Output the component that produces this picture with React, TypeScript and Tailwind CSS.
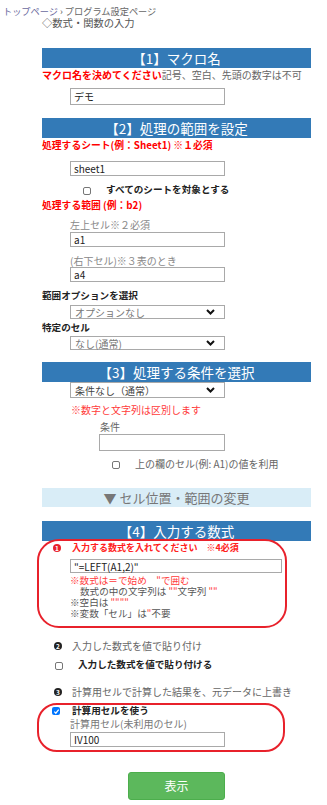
import React from "react";

const Header = ({ children, className = "" }: { children: React.ReactNode; className?: string }) => (
  <div className={`h-[20px] bg-[#337ab7] text-white text-[13.5px] leading-[20px] text-center ${className}`}>{children}</div>
);

const Input = ({ value, className = "" }: { value: string; className?: string }) => (
  <div className={`border border-[#a9a9a9] bg-white text-[10px] text-[#222] pl-[3px] flex items-center ${className}`}>{value}</div>
);

const Chevron = () => (
  <svg width="9" height="6" viewBox="0 0 9 6" className="shrink-0">
    <polyline points="1,1 4.5,4.5 8,1" fill="none" stroke="#111" strokeWidth="2" />
  </svg>
);

const Select = ({ value, className = "" }: { value: string; className?: string }) => (
  <div className={`border border-[#a9a9a9] bg-white text-[10px] pl-[4px] pr-[9px] flex items-center justify-between ${className}`}>
    <span>{value}</span>
    <Chevron />
  </div>
);

const Box = ({ checked = false, className = "" }: { checked?: boolean; className?: string }) =>
  checked ? (
    <span className={`inline-flex shrink-0 items-center justify-center w-[8px] h-[8px] rounded-[2px] bg-[#0075ff] ${className}`}>
      <svg width="7" height="7" viewBox="0 0 8 8">
        <polyline points="1.5,4.2 3.2,6 6.5,1.8" fill="none" stroke="#fff" strokeWidth="1.4" />
      </svg>
    </span>
  ) : (
    <span className={`inline-block shrink-0 w-[8px] h-[8px] rounded-[2px] border border-[#767676] bg-white ${className}`} />
  );

const Num = ({ n, red = false }: { n: string; red?: boolean }) => (
  <span
    className={`inline-flex shrink-0 items-center justify-center w-[8px] h-[8px] rounded-full text-white text-[6.5px] font-bold leading-none ${
      red ? "bg-[#e8212b]" : "bg-[#222]"
    }`}
  >
    {n}
  </span>
);

export default function App() {
  return (
    <div className="w-[327px] h-[805px] bg-white overflow-hidden font-['Noto_Sans_CJK_JP','Noto_Sans',sans-serif] text-[#333]">
      <div className="h-[17px] pt-[5px] pl-[3px] text-[9.2px] leading-[12px] whitespace-nowrap">
        <span className="text-[#6a6a9e]">トップページ</span>
        <span className="text-[#555]"> › </span>
        <span className="text-[#666]">プログラム設定ページ</span>
      </div>
      <div className="pl-[42px] h-[12px] text-[10.3px] leading-[12px] text-[#555]">◇数式・関数の入力</div>

      <div className="ml-[42px] w-[269px] flex flex-col">
        {/* 1 */}
        <Header className="mt-[19px]">【1】マクロ名</Header>
        <div className="h-[14px] leading-[14px] text-[10px] whitespace-nowrap">
          <span className="text-[#ff0000] font-bold">マクロ名を決めてください</span>
          <span className="text-[#666]">記号、空白、先頭の数字は不可</span>
        </div>
        <Input value="デモ" className="mt-[6px] ml-[28px] w-[155px] h-[17px]" />

        {/* 2 */}
        <Header className="mt-[13px]">【2】処理の範囲を設定</Header>
        <div className="h-[14px] leading-[14px] text-[9.8px] text-[#ff0000] font-bold whitespace-nowrap">
          処理するシート(例：Sheet1) ※１必須
        </div>
        <Input value="sheet1" className="mt-[9px] ml-[28px] w-[155px] h-[15px]" />
        <div className="mt-[6px] h-[14px] pl-[41px] flex items-center gap-[15px]">
          <Box className="mt-[4px]" />
          <span className="leading-[14px] text-[9.6px] font-bold text-[#222] whitespace-nowrap">すべてのシートを対象とする</span>
        </div>
        <div className="mt-[2px] h-[14px] leading-[14px] text-[9.8px] text-[#ff0000] font-bold">処理する範囲 (例：b2)</div>
        <div className="mt-[6px] ml-[28px] h-[14px] leading-[14px] text-[10px] text-[#888]">左上セル※２必須</div>
        <Input value="a1" className="ml-[28px] w-[155px] h-[15px]" />
        <div className="mt-[8px] ml-[28px] h-[12px] leading-[12px] text-[10px] text-[#888]">(右下セル)※３表のとき</div>
        <Input value="a4" className="ml-[28px] w-[155px] h-[15px]" />
        <div className="mt-[7px] h-[12px] leading-[12px] text-[9.6px] font-bold text-[#222]">範囲オプションを選択</div>
        <Select value="オプションなし" className="mt-[4px] ml-[28px] w-[155px] h-[14px] text-[#777]" />
        <div className="mt-[2px] h-[12px] leading-[12px] text-[9.6px] font-bold text-[#222]">特定のセル</div>
        <Select value="なし(通常)" className="mt-[3px] ml-[28px] w-[155px] h-[14px] text-[#777]" />

        {/* 3 */}
        <Header className="mt-[12px]">【3】処理する条件を選択</Header>
        <Select value="条件なし（通常）" className="ml-[28px] w-[155px] h-[16px] text-[#444]" />
        <div className="mt-[5px] ml-[29px] h-[14px] leading-[14px] text-[10px] text-[#ff3b3b]">※数字と文字列は区別します</div>
        <div className="mt-[3px] ml-[58px] h-[14px] leading-[14px] text-[10px] text-[#666]">条件</div>
        <Input value="" className="ml-[57px] w-[126px] h-[17px]" />
        <div className="mt-[6px] h-[14px] pl-[70px] flex items-center gap-[15px]">
          <Box className="mt-[2px]" />
          <span className="leading-[14px] text-[10px] text-[#666] whitespace-nowrap">上の欄のセル(例: A1)の値を利用</span>
        </div>

        <div className="mt-[17px] h-[19px] bg-[#d9edf7] text-[#777] text-[13px] leading-[19px] text-center">▼ セル位置・範囲の変更</div>

        {/* 4 */}
        <Header className="mt-[14px]">【4】入力する数式</Header>
        <div className="-mt-[2px] -ml-[5px] w-[250px] h-[89px] border-2 border-[#e8212b] rounded-[22px] flex flex-col">
          <div className="h-[14px] pl-[14px] flex items-center gap-[11px]">
            <Num n="1" red />
            <span className="leading-[14px] text-[9px] font-bold text-[#ff2020] whitespace-nowrap">入力する数式を入れてください　※4必須</span>
          </div>
          <Input value={'"=LEFT(A1,2)"'} className="mt-[4px] ml-[31px] w-[212px] h-[14px]" />
          <div className="mt-[2px] ml-[31px] text-[9.6px] leading-[11px] whitespace-nowrap flex flex-col">
            <div className="text-[#ff3b3b]">※数式は＝で始め　"で囲む</div>
            <div className="pl-[10px] text-[#555]">
              数式の中の文字列は <span className="text-[#ff3b3b]">""</span>文字列 <span className="text-[#ff3b3b]">""</span>
            </div>
            <div className="text-[#555]">
              ※空白は <span className="text-[#ff3b3b]">""""</span>
            </div>
            <div className="text-[#555]">
              ※変数「セル」は<span className="text-[#ff3b3b]">"</span>不要
            </div>
          </div>
        </div>

        <div className="mt-[11px] h-[14px] pl-[12px] flex items-center gap-[10px]">
          <Num n="2" />
          <span className="leading-[14px] text-[10px] text-[#666] whitespace-nowrap">入力した数式を値で貼り付け</span>
        </div>
        <div className="mt-[4px] h-[14px] pl-[13px] flex items-center gap-[15px]">
          <Box className="mt-[3px]" />
          <span className="leading-[14px] text-[9.6px] font-bold text-[#222] whitespace-nowrap">入力した数式を値で貼り付ける</span>
        </div>
        <div className="mt-[14px] h-[14px] pl-[12px] flex items-center gap-[10px]">
          <Num n="3" />
          <span className="leading-[14px] text-[10px] text-[#666] whitespace-nowrap">計算用セルで計算した結果を、元データに上書き</span>
        </div>
        <div className="mt-[4px] -ml-[5px] w-[248px] h-[49px] border-2 border-[#e8212b] rounded-[20px] flex flex-col">
          <div className="h-[10px] pl-[13px] flex items-center gap-[12px]">
            <Box checked className="mt-[2px]" />
            <span className="leading-[10px] text-[9.6px] font-bold text-[#222] whitespace-nowrap">計算用セルを使う</span>
          </div>
          <div className="mt-[2px] ml-[31px] h-[14px] leading-[14px] text-[10px] text-[#777]">計算用セル(未利用のセル)</div>
          <Input value="IV100" className="mt-[1px] ml-[31px] w-[155px] h-[15px]" />
        </div>
      </div>

      <div className="mt-[20px] ml-[128px] w-[97px] h-[28px] rounded-[3px] bg-[#5cb85c] border border-[#4cae4c] text-white text-[12px] flex items-center justify-center">
        表示
      </div>
    </div>
  );
}
